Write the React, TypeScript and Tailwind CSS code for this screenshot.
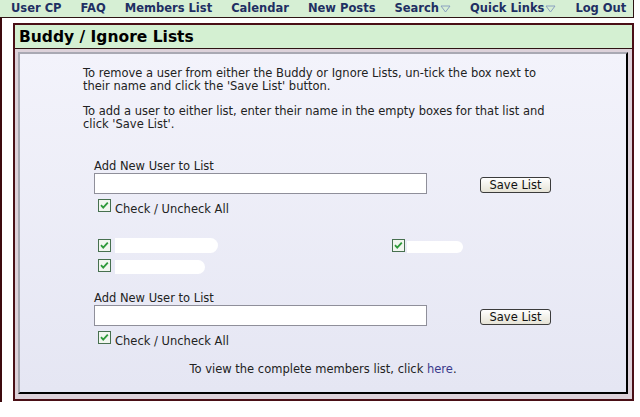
import React from 'react';

const navItems: { label: string; menu?: boolean }[] = [
  { label: 'User CP' },
  { label: 'FAQ' },
  { label: 'Members List' },
  { label: 'Calendar' },
  { label: 'New Posts' },
  { label: 'Search', menu: true },
  { label: 'Quick Links', menu: true },
  { label: 'Log Out' },
];

const Tick: React.FC = () => (
  <svg width="13" height="13" viewBox="0 0 13 13" className="shrink-0">
    <rect x="0.5" y="0.5" width="12" height="12" fill="#f1f6ef" stroke="#47704f" />
    <path d="M3 6.2 L5.2 8.6 L9.8 3.6" fill="none" stroke="#2f9a3a" strokeWidth="1.8" />
  </svg>
);

const SaveButton: React.FC = () => (
  <button className="h-[16px] w-[71px] rounded-[3px] border border-[#3b3b3b] bg-gradient-to-b from-white to-[#e6e3d6] text-[11.5px] leading-[14px] text-[#111]">
    Save List
  </button>
);

const AddUser: React.FC = () => (
  <div className="pl-[74px]">
    <div className="text-[11.5px] leading-[13px] text-[#222]">Add New User to List</div>
    <div className="flex h-[21px] items-center">
      <input
        type="text"
        className="h-[21px] w-[333px] border border-[#8f8f9a] bg-white outline-none"
      />
      <div className="ml-[53px] mt-[2px] flex">
        <SaveButton />
      </div>
    </div>
    <label className="mt-[5px] ml-[4px] flex h-[15px] items-start gap-[4px] text-[11.5px] leading-[13px] text-[#222]">
      <Tick />
      <span className="mt-[4px]">Check / Uncheck All</span>
    </label>
  </div>
);

export default function App() {
  return (
    <div
      className="h-[417px] w-[640px] overflow-hidden bg-white"
      style={{ fontFamily: '"DejaVu Sans", Verdana, sans-serif' }}
    >
      {/* Nav bar */}
      <div className="flex h-[18px] w-[634px] items-center gap-[19px] border-b border-r border-[#2e1414] bg-[#d6efd4] pl-[11px] text-[11.5px] font-bold text-[#1f2f63]">
        {navItems.map((item) => (
          <span key={item.label} className="flex items-center">
            {item.label}
            {item.menu && (
              <svg width="11" height="8" viewBox="0 0 11 8" className="ml-[1px]">
                <path d="M1 1 H10 L5.5 7 Z" fill="none" stroke="#8aa0c0" strokeWidth="1" />
              </svg>
            )}
          </span>
        ))}
      </div>

      {/* Page */}
      <div className="h-[384px] border-l-2 border-[#3d0a0e] pt-[5px] pl-[11px]">
        <div className="w-[621px] border-2 border-[#4a0f16] bg-[#ddd2da]">
          <div className="h-[24px] border-b border-[#2e1414] bg-[#d4f0d2] pl-[4px] text-[15.5px] font-bold leading-[24px] text-black">
            Buddy / Ignore Lists
          </div>
          <div className="pt-[3px] pr-[4px] pb-[5px] pl-[3px]">
            <div className="h-[342px] border-2 border-t-[#a9a9b3] border-l-[#a9a9b3] border-r-black border-b-black bg-gradient-to-b from-[#f3f3fb] to-[#e5e6f3]">
              <div className="pl-[63px] pt-[13px] text-[11.5px] leading-[13px] text-[#222]">
                <p>
                  To remove a user from either the Buddy or Ignore Lists, un-tick the box next to
                  <br />
                  their name and click the 'Save List' button.
                </p>
                <p className="mt-[12px]">
                  To add a user to either list, enter their name in the empty boxes for that list and
                  <br />
                  click 'Save List'.
                </p>
              </div>

              <div className="mt-[29px]">
                <AddUser />
              </div>

              {/* Buddy entries */}
              <div className="mt-[25px] pl-[78px]">
                <div className="flex h-[20px] items-start">
                  <Tick />
                  <div className="ml-[4px] mt-[-1px] h-[15px] w-[103px] rounded-r-full bg-white" />
                  <div className="ml-[174px]">
                    <Tick />
                  </div>
                  <div className="ml-[2px] mt-[2px] h-[12px] w-[56px] rounded-r-full bg-white" />
                </div>
                <div className="flex h-[20px] items-start">
                  <Tick />
                  <div className="ml-[4px] mt-[1px] h-[14px] w-[90px] rounded-r-full bg-white" />
                </div>
              </div>

              <div className="mt-[13px]">
                <AddUser />
              </div>

              <div className="mt-[17px] text-center text-[11.5px] leading-[13px] text-[#222]">
                To view the complete members list, click{' '}
                <a className="text-[#3a3a8c]">here</a>.
              </div>
            </div>
          </div>
        </div>
      </div>
    </div>
  );
}
